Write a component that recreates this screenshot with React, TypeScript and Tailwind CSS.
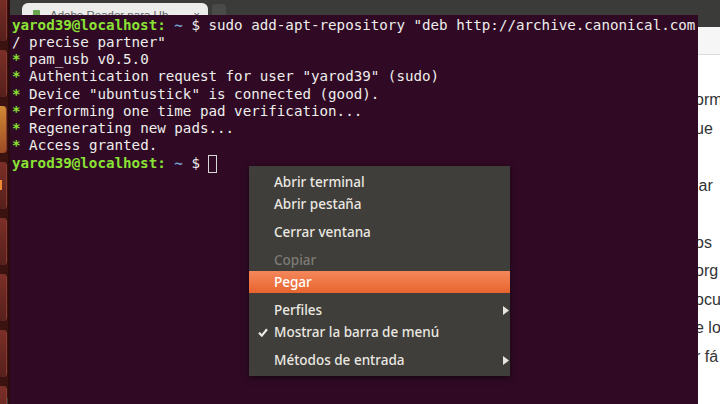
import React from "react";

const mono = { fontFamily: '"DejaVu Sans Mono", monospace' };

function Prompt() {
  return (
    <>
      <span className="font-bold text-[#8ae234]">yarod39@localhost:</span>
      <span className="font-bold text-[#729fcf]"> ~</span>
      <span className="text-[#eeeeec]"> $ </span>
    </>
  );
}

function Star({ children }: { children: React.ReactNode }) {
  return (
    <div>
      <span className="font-bold text-[#8ae234]">*</span>
      <span> {children}</span>
    </div>
  );
}

function Launcher() {
  const tiles = [0, 1, 2, 3, 4, 5, 6, 7];
  return (
    <div className="w-[8px] h-full bg-[#3a1210] flex flex-col gap-[9px] -mt-[6px] relative">
      {tiles.map((i) => (
        <div
          key={i}
          className={`h-[47px] w-[7px] shrink-0 rounded-r-[4px] border-r border-[#8a3a33] ${
            i === 2
              ? "bg-gradient-to-b from-[#d08a34] to-[#9c4a25]"
              : "bg-gradient-to-b from-[#7c2f28] to-[#55201b]"
          }`}
        />
      ))}
      <div className="absolute left-0 top-[186px] w-[2px] h-[10px] bg-[#f08a30]" />
    </div>
  );
}

function Arrow() {
  return (
    <svg width="6" height="9" viewBox="0 0 6 9" className="ml-auto mr-[1px]">
      <path d="M0 0 L6 4.5 L0 9 Z" fill="#e8e5de" />
    </svg>
  );
}

function MenuItem({
  label,
  disabled,
  active,
  arrow,
  checked,
}: {
  label: string;
  disabled?: boolean;
  active?: boolean;
  arrow?: boolean;
  checked?: boolean;
}) {
  return (
    <div
      className={`h-[22px] flex items-center pl-[25px] relative ${
        active ? "bg-gradient-to-b from-[#f3875a] to-[#e8642d] text-white" : ""
      } ${disabled ? "text-[#7d7b74]" : active ? "" : "text-[#ebe8e1]"}`}
    >
      {checked && (
        <svg width="10" height="9" viewBox="0 0 10 9" className="absolute left-[9px] top-[7px]">
          <path d="M1 4.8 L3.8 7.6 L9 1.2" stroke="#ebe8e1" strokeWidth="2.2" fill="none" />
        </svg>
      )}
      <span>{label}</span>
      {arrow && <Arrow />}
    </div>
  );
}

function ContextMenu() {
  return (
    <div
      className="absolute left-[249px] top-[166px] w-[261px] py-[5px] bg-[#3f3e3a] text-[13.5px] font-medium shadow-[0_2px_6px_rgba(0,0,0,0.5)]"
      style={{ fontFamily: '"Noto Sans", "Open Sans", sans-serif' }}
    >
      <MenuItem label="Abrir terminal" />
      <MenuItem label="Abrir pestaña" />
      <div className="h-[6px]" />
      <MenuItem label="Cerrar ventana" />
      <div className="h-[6px]" />
      <MenuItem label="Copiar" disabled />
      <MenuItem label="Pegar" active />
      <div className="h-[6px]" />
      <MenuItem label="Perfiles" arrow />
      <MenuItem label="Mostrar la barra de menú" checked />
      <div className="h-[6px]" />
      <MenuItem label="Métodos de entrada" arrow />
    </div>
  );
}

export default function App() {
  const pageLines = ["orm", "ue", "", "iar", "", "os", "org", "ocu", "e lo", "r fá"];
  return (
    <div className="w-[720px] h-[404px] overflow-hidden flex relative bg-[#3c3c3c]">
      <Launcher />
      <div className="w-[2px] h-full bg-[#2a0a0b]" />
      <div className="flex-1 flex flex-col min-w-0">
        {/* browser tab bar behind the terminal */}
        <div className="h-[15px] shrink-0 flex items-end bg-[#3b3b3a]">
          <div
            className="ml-[12px] w-[186px] h-[12px] rounded-t-[6px] bg-[#ececea] overflow-hidden flex items-start pt-[7px] text-[11.5px] leading-none text-[#666]"
            style={{ fontFamily: '"Liberation Sans", Arial, sans-serif' }}
          >
            <div className="ml-[11px] w-[7px] h-[7px] bg-[#6aa84f] rounded-[1px]" />
            <span className="ml-[10px]">Adobe Reader para Ub</span>
            <span className="ml-auto mr-[8px]">×</span>
          </div>
          <div className="ml-[4px] w-[14px] h-[11px] rounded-t-[4px] bg-[#4a4a48]" />
        </div>
        <div className="flex-1 flex min-h-0">
          <div
            className="w-[688px] h-full bg-[#300a24] text-[#eeeeec] text-[14.2px] leading-[17.25px] pl-[2px] pt-[1.5px] whitespace-pre"
            style={mono}
          >
            <div>
              <Prompt />
              <span>sudo add-apt-repository "deb http://archive.canonical.com</span>
            </div>
            <div>/ precise partner"</div>
            <Star>pam_usb v0.5.0</Star>
            <Star>Authentication request for user "yarod39" (sudo)</Star>
            <Star>Device "ubuntustick" is connected (good).</Star>
            <Star>Performing one time pad verification...</Star>
            <Star>Regenerating new pads...</Star>
            <Star>Access granted.</Star>
            <div className="flex items-start">
              <Prompt />
              <span className="inline-block w-[9px] h-[18px] border border-[#d8d8d8]" />
            </div>
          </div>
          <div className="flex-1 flex flex-col min-w-0">
            <div className="h-[12px] shrink-0 bg-[#3b3b3a]" />
            <div className="h-[28px] shrink-0 bg-[#f6f6f6] border-b border-[#dcdcdc]" />
            <div
              className="flex-1 bg-white pt-[31px] text-[16px] leading-[28.5px] text-[#333] whitespace-pre overflow-hidden"
              style={{ fontFamily: '"Liberation Sans", Arial, sans-serif' }}
            >
              {pageLines.map((l, i) => (
                <div key={i} className="-ml-[3px] h-[28.5px]">
                  {l}
                </div>
              ))}
            </div>
          </div>
        </div>
      </div>
      <ContextMenu />
    </div>
  );
}
